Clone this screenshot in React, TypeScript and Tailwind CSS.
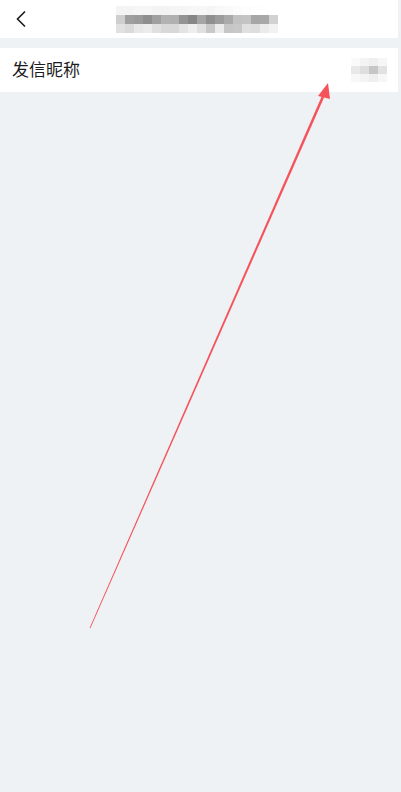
import React from "react";

// pixelated placeholder blocks (blurred text in the screenshot)
const titleTop = ["#f4f4f4", "#f4f4f4", "#f6f6f6", "#f6f6f6", "#f3f3f3", "#f3f3f3", "#f5f5f5", "#f5f5f5", "#f7f7f7", "#f7f7f7", "#f5f5f5", "#f8f8f8", "#fafafa", "#fcfcfc", "#fdfdfd", "#fefefe", "#fefefe", "#ffffff"];
const titleMid = ["#cfcfcf", "#9f9f9f", "#9a9a9a", "#8e8e8e", "#a0a0a0", "#b2b2b2", "#b0b0b0", "#939393", "#868686", "#a5a5a5", "#8f8f8f", "#9c9c9c", "#aaaaaa", "#c2c2c2", "#c4c4c4", "#a6a6a6", "#a8a8a8", "#d2d2d2"];
const titleLow = ["#e1e1e1", "#dadada", "#e8e8e8", "#ececec", "#e0e0e0", "#d8d8d8", "#d8d8d8", "#e4e4e4", "#eeeeee", "#e0e0e0", "#c8c8c8", "#ebebeb", "#c6c6c6", "#c8c8c8", "#e0e0e0", "#dedede", "#ebebeb", "#f2f2f2"];

const valRows = [
  ["#fafafa", "#f4f4f4", "#efefef", "#f6f6f6"],
  ["#e8e8e8", "#dedede", "#c6c6c6", "#e2e2e2"],
  ["#f8f8f8", "#f4f4f4", "#efefef", "#f7f7f7"],
];

function Blocks({ rows, w, h }: { rows: string[][]; w: string; h: string }) {
  return (
    <div className="flex flex-col">
      {rows.map((r, i) => (
        <div key={i} className="flex">
          {r.map((c, j) => (
            <div key={j} className={`${w} ${h}`} style={{ backgroundColor: c }} />
          ))}
        </div>
      ))}
    </div>
  );
}

export default function App() {
  return (
    <div
      className="relative h-[792px] w-[401px] overflow-hidden bg-[#eff2f5]"
      style={{ fontFamily: '"Noto Sans CJK SC", "Noto Sans", sans-serif' }}
    >
      <div className="w-[398px]">
        {/* header */}
        <div className="flex h-[38px] items-center bg-white">
          <div className="flex w-[40px] justify-center pl-[1px]">
            <svg width="12" height="18" viewBox="0 0 12 18" fill="none">
              <path d="M10 1.5 L2.5 9 L10 16.5" stroke="#1a1a1a" strokeWidth="1.6" />
            </svg>
          </div>
          <div className="ml-[76px]">
            <Blocks rows={[titleTop, titleMid, titleLow]} w="w-[9px]" h="h-[9px]" />
          </div>
        </div>

        {/* row */}
        <div className="mt-[10px] flex h-[44px] items-center justify-between bg-white pl-[12px] pr-[11px]">
          <span className="-mt-[2px] text-[17px] text-[#1c1c1c]">发信昵称</span>
          <Blocks rows={valRows} w="w-[9px]" h="h-[8px]" />
        </div>
      </div>

      {/* annotation arrow, thin at the tail and thicker toward the head */}
      <svg className="pointer-events-none absolute left-0 top-0" width="401" height="792" viewBox="0 0 401 792">
        <polygon points="89.6,628 90.4,628.3 326,93 323.6,92" fill="#f5525a" />
        <polygon points="328,83 318,96 330,99" fill="#f5525a" />
      </svg>
    </div>
  );
}
